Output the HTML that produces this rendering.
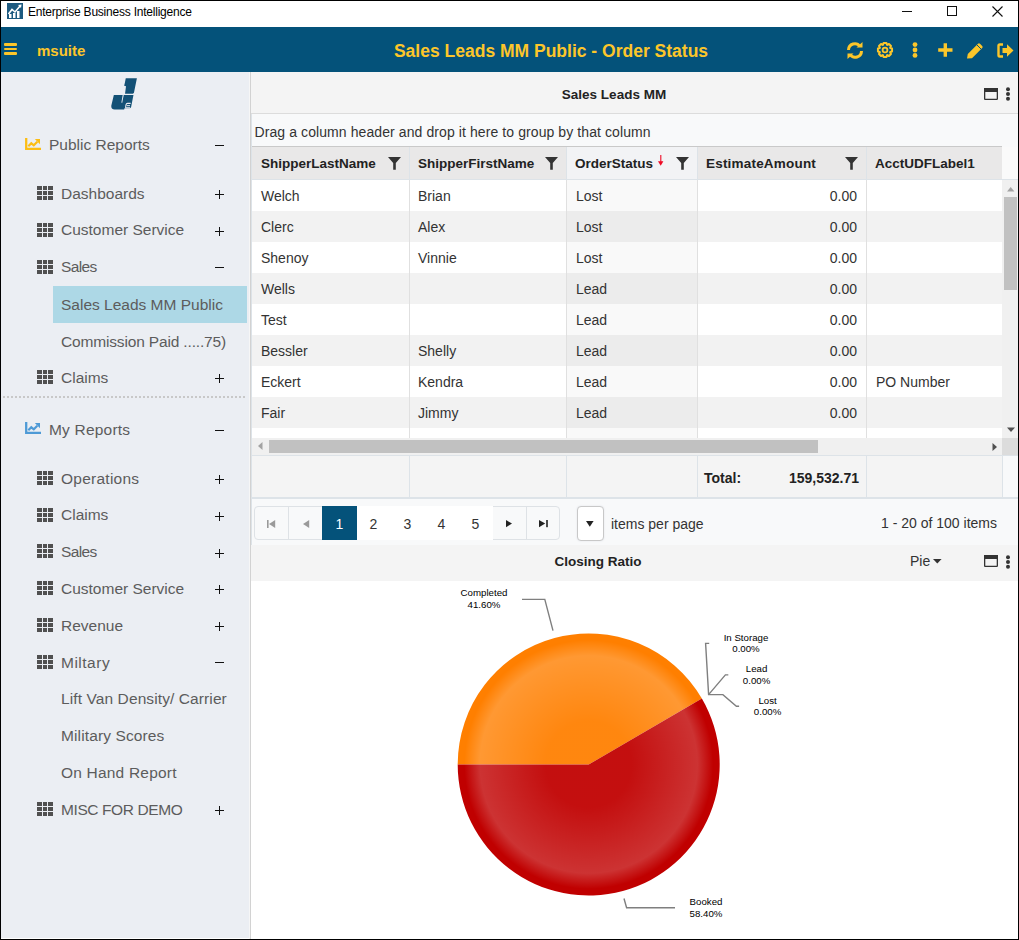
<!DOCTYPE html><html><head><meta charset="utf-8"><style>
*{box-sizing:border-box;margin:0;padding:0}
html,body{width:1019px;height:940px;overflow:hidden;background:#fff}
body{position:relative;font-family:"Liberation Sans",sans-serif;color:#333}
.a{position:absolute}
.t{position:absolute;white-space:nowrap;line-height:1}
svg{position:absolute;overflow:visible}
</style></head><body>
<div class="a" style="left:0px;top:0px;width:1019px;height:27px;background:#fff"></div>
<svg style="left:7px;top:3px" width="16" height="16" viewBox="0 0 16 16"><rect x="0" y="0" width="16" height="16" fill="#1d5a80"/><path d="M1.5 11 L5 6.5 L8 9 L13.5 2.5" stroke="#fff" stroke-width="1.6" fill="none"/><path d="M11 2 L14.5 1.5 L14 5 Z" fill="#fff"/><rect x="2" y="11" width="2.5" height="4" fill="#fff"/><rect x="6" y="10" width="2.5" height="5" fill="#fff"/><rect x="10" y="8" width="2.5" height="7" fill="#fff"/></svg>
<div class="t" style="left:28px;top:5.54px;font-size:12px;color:#000;font-weight:400;letter-spacing:-0.22px">Enterprise Business Intelligence</div>
<div class="a" style="left:902px;top:11px;width:10px;height:1px;background:#111"></div>
<div class="a" style="left:947px;top:6px;width:10px;height:10px;border:1px solid #111"></div>
<svg style="left:992px;top:6px" width="11" height="11" viewBox="0 0 11 11"><path d="M0.5 0.5 L10.5 10.5 M10.5 0.5 L0.5 10.5" stroke="#111" stroke-width="1.1"/></svg>
<div class="a" style="left:0px;top:27px;width:1019px;height:45px;background:#04527a"></div>
<div class="a" style="left:4px;top:43px;width:13px;height:2.5px;background:#fcc62a;border-radius:1px"></div>
<div class="a" style="left:4px;top:47.5px;width:13px;height:2.5px;background:#fcc62a;border-radius:1px"></div>
<div class="a" style="left:4px;top:52px;width:13px;height:2.5px;background:#fcc62a;border-radius:1px"></div>
<div class="t" style="left:37px;top:43.30px;font-size:15px;color:#fcc62a;font-weight:700;">msuite</div>
<div class="t" style="left:251px;width:600px;text-align:center;top:43.19px;font-size:17.5px;color:#fcc62a;font-weight:700;">Sales Leads MM Public - Order Status</div>
<svg style="left:846px;top:42px" width="18" height="17" viewBox="0 0 18 17"><path d="M2.5 8 A6.3 6.3 0 0 1 14 4.5" stroke="#fcc62a" stroke-width="3" fill="none"/><path d="M10.5 5.5 L16.5 5.5 L16.5 0 Z" fill="#fcc62a"/><path d="M15.5 9 A6.3 6.3 0 0 1 4 12.5" stroke="#fcc62a" stroke-width="3" fill="none"/><path d="M7.5 11.5 L1.5 11.5 L1.5 17 Z" fill="#fcc62a"/></svg><svg style="left:877px;top:42px" width="16" height="16" viewBox="0 0 16 16"><polygon points="15.06,6.57 15.06,9.43 13.24,9.97 13.10,10.31 14.00,11.98 11.98,14.00 10.31,13.10 9.97,13.24 9.43,15.06 6.57,15.06 6.03,13.24 5.69,13.10 4.02,14.00 2.00,11.98 2.90,10.31 2.76,9.97 0.94,9.43 0.94,6.57 2.76,6.03 2.90,5.69 2.00,4.02 4.02,2.00 5.69,2.90 6.03,2.76 6.57,0.94 9.43,0.94 9.97,2.76 10.31,2.90 11.98,2.00 14.00,4.02 13.10,5.69 13.24,6.03" fill="none" stroke="#fcc62a" stroke-width="2" stroke-linejoin="round"/><circle cx="8" cy="8" r="2.4" fill="none" stroke="#fcc62a" stroke-width="1.8"/></svg><svg style="left:912px;top:42px" width="6" height="16" viewBox="0 0 6 16"><circle cx="3" cy="2.6" r="2.4" fill="#fcc62a"/><circle cx="3" cy="8" r="2.4" fill="#fcc62a"/><circle cx="3" cy="13.4" r="2.4" fill="#fcc62a"/></svg><svg style="left:937px;top:42px" width="16" height="16" viewBox="0 0 16 16"><path d="M8.3 1.2 V14.8 M1.2 8 H15.5" stroke="#fcc62a" stroke-width="3.4" stroke-linecap="butt"/></svg><svg style="left:966px;top:42px" width="18" height="17" viewBox="0 0 18 17"><path d="M1 16.5 L1.8 12 L12 1.8 Q13 0.8 14 1.8 L16.2 4 Q17.2 5 16.2 6 L6 16.2 Z" fill="#fcc62a"/><path d="M11 3 L15 7" stroke="#04527a" stroke-width="1"/></svg><svg style="left:997px;top:43px" width="17" height="15" viewBox="0 0 17 15"><path d="M6 1.5 H2.8 Q1.5 1.5 1.5 2.8 V12.2 Q1.5 13.5 2.8 13.5 H6" stroke="#fcc62a" stroke-width="2.4" fill="none"/><path d="M5.5 5 H10 V1.2 L16.5 7.5 L10 13.8 V10 H5.5 Z" fill="#fcc62a"/></svg>
<div class="a" style="left:0px;top:72px;width:249px;height:866px;background:#ebeef3"></div>
<div class="a" style="left:249px;top:72px;width:1px;height:868px;background:#f6f6f6"></div>
<div class="a" style="left:250px;top:72px;width:1px;height:868px;background:#d2d2d2"></div>
<svg style="left:100px;top:72px" width="50" height="45" viewBox="0 0 1019 917"><g fill="#135176"><path d="M525 125 L752 125 L692 425 Q686 442 668 442 L510 442 L530 292 L492 280 L506 222 Z"/><path d="M282 470 L682 470 L634 712 Q626 738 598 738 L500 740 L492 765 L300 765 Q222 762 230 690 Z"/></g><path d="M462 470 L484 470 L452 632 L436 622 Z" fill="#ebeef3"/><path d="M625 640 L560 640 Q535 640 530 670 L522 712 Q518 730 540 730 L612 730" fill="none" stroke="#ebeef3" stroke-width="22"/><path d="M545 686 L612 686" stroke="#ebeef3" stroke-width="20"/></svg>
<svg style="left:25px;top:138px" width="16" height="13" viewBox="0 0 16 13"><path d="M1.2 0 V10.9 H16" stroke="#fcbd14" stroke-width="2.3" fill="none"/><path d="M3.3 8.3 L6.3 5.3 L8.8 7.3 L12.3 3.8" stroke="#fcbd14" stroke-width="2.2" fill="none"/><path d="M9.8 1 L15 1 L15 6.2 Z" fill="#fcbd14"/></svg>
<div class="t" style="left:49px;top:137.48px;font-size:15.5px;color:#5c5c5c;font-weight:400;">Public Reports</div>
<div class="a" style="left:215px;top:145px;width:9px;height:1px;background:#111"></div>
<svg style="left:37px;top:185.80px" width="16" height="14" viewBox="0 0 16 14"><g fill="#505050"><rect x="0" y="0" width="5" height="4"/><rect x="6" y="0" width="4" height="4"/><rect x="11" y="0" width="5" height="4"/><rect x="0" y="5" width="5" height="4"/><rect x="6" y="5" width="4" height="4"/><rect x="11" y="5" width="5" height="4"/><rect x="0" y="10" width="5" height="4"/><rect x="6" y="10" width="4" height="4"/><rect x="11" y="10" width="5" height="4"/></g></svg>
<div class="t" style="left:61px;top:185.68px;font-size:15.5px;color:#5c5c5c;font-weight:400;">Dashboards</div>
<div class="a" style="left:215px;top:194px;width:9px;height:1px;background:#111"></div>
<div class="a" style="left:219px;top:190px;width:1px;height:9px;background:#111"></div>
<svg style="left:37px;top:222.60px" width="16" height="14" viewBox="0 0 16 14"><g fill="#505050"><rect x="0" y="0" width="5" height="4"/><rect x="6" y="0" width="4" height="4"/><rect x="11" y="0" width="5" height="4"/><rect x="0" y="5" width="5" height="4"/><rect x="6" y="5" width="4" height="4"/><rect x="11" y="5" width="5" height="4"/><rect x="0" y="10" width="5" height="4"/><rect x="6" y="10" width="4" height="4"/><rect x="11" y="10" width="5" height="4"/></g></svg>
<div class="t" style="left:61px;top:222.48px;font-size:15.5px;color:#5c5c5c;font-weight:400;">Customer Service</div>
<div class="a" style="left:215px;top:231px;width:9px;height:1px;background:#111"></div>
<div class="a" style="left:219px;top:227px;width:1px;height:9px;background:#111"></div>
<svg style="left:37px;top:259.50px" width="16" height="14" viewBox="0 0 16 14"><g fill="#505050"><rect x="0" y="0" width="5" height="4"/><rect x="6" y="0" width="4" height="4"/><rect x="11" y="0" width="5" height="4"/><rect x="0" y="5" width="5" height="4"/><rect x="6" y="5" width="4" height="4"/><rect x="11" y="5" width="5" height="4"/><rect x="0" y="10" width="5" height="4"/><rect x="6" y="10" width="4" height="4"/><rect x="11" y="10" width="5" height="4"/></g></svg>
<div class="t" style="left:61px;top:259.38px;font-size:15.5px;color:#5c5c5c;font-weight:400;;letter-spacing:-0.6px">Sales</div>
<div class="a" style="left:215px;top:267px;width:9px;height:1px;background:#111"></div>
<div class="a" style="left:53px;top:286px;width:194px;height:37px;background:#add8e6"></div>
<div class="t" style="left:61px;top:296.88px;font-size:15.5px;color:#5c5c5c;font-weight:400;">Sales Leads MM Public</div>
<div class="t" style="left:61px;top:333.88px;font-size:15.5px;color:#5c5c5c;font-weight:400;;letter-spacing:-0.16px">Commission Paid .....75)</div>
<svg style="left:37px;top:370.00px" width="16" height="14" viewBox="0 0 16 14"><g fill="#505050"><rect x="0" y="0" width="5" height="4"/><rect x="6" y="0" width="4" height="4"/><rect x="11" y="0" width="5" height="4"/><rect x="0" y="5" width="5" height="4"/><rect x="6" y="5" width="4" height="4"/><rect x="11" y="5" width="5" height="4"/><rect x="0" y="10" width="5" height="4"/><rect x="6" y="10" width="4" height="4"/><rect x="11" y="10" width="5" height="4"/></g></svg>
<div class="t" style="left:61px;top:369.88px;font-size:15.5px;color:#5c5c5c;font-weight:400;">Claims</div>
<div class="a" style="left:215px;top:378px;width:9px;height:1px;background:#111"></div>
<div class="a" style="left:219px;top:374px;width:1px;height:9px;background:#111"></div>
<div class="a" style="left:3px;top:396px;width:244px;height:2px;background:repeating-linear-gradient(90deg,#c8c8c8 0 2px,transparent 2px 4px)"></div>
<svg style="left:25px;top:422px" width="16" height="13" viewBox="0 0 16 13"><path d="M1.2 0 V10.9 H16" stroke="#4e9ad6" stroke-width="2.3" fill="none"/><path d="M3.3 8.3 L6.3 5.3 L8.8 7.3 L12.3 3.8" stroke="#4e9ad6" stroke-width="2.2" fill="none"/><path d="M9.8 1 L15 1 L15 6.2 Z" fill="#4e9ad6"/></svg>
<div class="t" style="left:49px;top:421.68px;font-size:15.5px;color:#5c5c5c;font-weight:400;;letter-spacing:0.2px">My Reports</div>
<div class="a" style="left:215px;top:430px;width:9px;height:1px;background:#111"></div>
<svg style="left:37px;top:470.80px" width="16" height="14" viewBox="0 0 16 14"><g fill="#505050"><rect x="0" y="0" width="5" height="4"/><rect x="6" y="0" width="4" height="4"/><rect x="11" y="0" width="5" height="4"/><rect x="0" y="5" width="5" height="4"/><rect x="6" y="5" width="4" height="4"/><rect x="11" y="5" width="5" height="4"/><rect x="0" y="10" width="5" height="4"/><rect x="6" y="10" width="4" height="4"/><rect x="11" y="10" width="5" height="4"/></g></svg>
<div class="t" style="left:61px;top:470.68px;font-size:15.5px;color:#5c5c5c;font-weight:400;;letter-spacing:0.25px">Operations</div>
<div class="a" style="left:215px;top:479px;width:9px;height:1px;background:#111"></div>
<div class="a" style="left:219px;top:475px;width:1px;height:9px;background:#111"></div>
<svg style="left:37px;top:507.57px" width="16" height="14" viewBox="0 0 16 14"><g fill="#505050"><rect x="0" y="0" width="5" height="4"/><rect x="6" y="0" width="4" height="4"/><rect x="11" y="0" width="5" height="4"/><rect x="0" y="5" width="5" height="4"/><rect x="6" y="5" width="4" height="4"/><rect x="11" y="5" width="5" height="4"/><rect x="0" y="10" width="5" height="4"/><rect x="6" y="10" width="4" height="4"/><rect x="11" y="10" width="5" height="4"/></g></svg>
<div class="t" style="left:61px;top:507.45px;font-size:15.5px;color:#5c5c5c;font-weight:400;">Claims</div>
<div class="a" style="left:215px;top:516px;width:9px;height:1px;background:#111"></div>
<div class="a" style="left:219px;top:512px;width:1px;height:9px;background:#111"></div>
<svg style="left:37px;top:544.34px" width="16" height="14" viewBox="0 0 16 14"><g fill="#505050"><rect x="0" y="0" width="5" height="4"/><rect x="6" y="0" width="4" height="4"/><rect x="11" y="0" width="5" height="4"/><rect x="0" y="5" width="5" height="4"/><rect x="6" y="5" width="4" height="4"/><rect x="11" y="5" width="5" height="4"/><rect x="0" y="10" width="5" height="4"/><rect x="6" y="10" width="4" height="4"/><rect x="11" y="10" width="5" height="4"/></g></svg>
<div class="t" style="left:61px;top:544.22px;font-size:15.5px;color:#5c5c5c;font-weight:400;;letter-spacing:-0.6px">Sales</div>
<div class="a" style="left:215px;top:553px;width:9px;height:1px;background:#111"></div>
<div class="a" style="left:219px;top:549px;width:1px;height:9px;background:#111"></div>
<svg style="left:37px;top:581.11px" width="16" height="14" viewBox="0 0 16 14"><g fill="#505050"><rect x="0" y="0" width="5" height="4"/><rect x="6" y="0" width="4" height="4"/><rect x="11" y="0" width="5" height="4"/><rect x="0" y="5" width="5" height="4"/><rect x="6" y="5" width="4" height="4"/><rect x="11" y="5" width="5" height="4"/><rect x="0" y="10" width="5" height="4"/><rect x="6" y="10" width="4" height="4"/><rect x="11" y="10" width="5" height="4"/></g></svg>
<div class="t" style="left:61px;top:580.99px;font-size:15.5px;color:#5c5c5c;font-weight:400;">Customer Service</div>
<div class="a" style="left:215px;top:589px;width:9px;height:1px;background:#111"></div>
<div class="a" style="left:219px;top:585px;width:1px;height:9px;background:#111"></div>
<svg style="left:37px;top:617.88px" width="16" height="14" viewBox="0 0 16 14"><g fill="#505050"><rect x="0" y="0" width="5" height="4"/><rect x="6" y="0" width="4" height="4"/><rect x="11" y="0" width="5" height="4"/><rect x="0" y="5" width="5" height="4"/><rect x="6" y="5" width="4" height="4"/><rect x="11" y="5" width="5" height="4"/><rect x="0" y="10" width="5" height="4"/><rect x="6" y="10" width="4" height="4"/><rect x="11" y="10" width="5" height="4"/></g></svg>
<div class="t" style="left:61px;top:617.76px;font-size:15.5px;color:#5c5c5c;font-weight:400;">Revenue</div>
<div class="a" style="left:215px;top:626px;width:9px;height:1px;background:#111"></div>
<div class="a" style="left:219px;top:622px;width:1px;height:9px;background:#111"></div>
<svg style="left:37px;top:654.65px" width="16" height="14" viewBox="0 0 16 14"><g fill="#505050"><rect x="0" y="0" width="5" height="4"/><rect x="6" y="0" width="4" height="4"/><rect x="11" y="0" width="5" height="4"/><rect x="0" y="5" width="5" height="4"/><rect x="6" y="5" width="4" height="4"/><rect x="11" y="5" width="5" height="4"/><rect x="0" y="10" width="5" height="4"/><rect x="6" y="10" width="4" height="4"/><rect x="11" y="10" width="5" height="4"/></g></svg>
<div class="t" style="left:61px;top:654.53px;font-size:15.5px;color:#5c5c5c;font-weight:400;;letter-spacing:0.5px">Miltary</div>
<div class="a" style="left:215px;top:662px;width:9px;height:1px;background:#111"></div>
<div class="t" style="left:61px;top:691.30px;font-size:15.5px;color:#5c5c5c;font-weight:400;;letter-spacing:0.1px">Lift Van Density/ Carrier</div>
<div class="t" style="left:61px;top:728.07px;font-size:15.5px;color:#5c5c5c;font-weight:400;;letter-spacing:0.12px">Military Scores</div>
<div class="t" style="left:61px;top:764.84px;font-size:15.5px;color:#5c5c5c;font-weight:400;;letter-spacing:0.2px">On Hand Report</div>
<svg style="left:37px;top:801.70px" width="16" height="14" viewBox="0 0 16 14"><g fill="#505050"><rect x="0" y="0" width="5" height="4"/><rect x="6" y="0" width="4" height="4"/><rect x="11" y="0" width="5" height="4"/><rect x="0" y="5" width="5" height="4"/><rect x="6" y="5" width="4" height="4"/><rect x="11" y="5" width="5" height="4"/><rect x="0" y="10" width="5" height="4"/><rect x="6" y="10" width="4" height="4"/><rect x="11" y="10" width="5" height="4"/></g></svg>
<div class="t" style="left:61px;top:801.58px;font-size:15.5px;color:#5c5c5c;font-weight:400;;letter-spacing:-0.4px">MISC FOR DEMO</div>
<div class="a" style="left:215px;top:810px;width:9px;height:1px;background:#111"></div>
<div class="a" style="left:219px;top:806px;width:1px;height:9px;background:#111"></div>
<div class="a" style="left:251px;top:72px;width:767px;height:41px;background:#f4f4f4"></div>
<div class="a" style="left:251px;top:113px;width:767px;height:1px;background:#dcdcdc"></div>
<div class="t" style="left:314px;width:600px;text-align:center;top:88.07px;font-size:13.5px;color:#222;font-weight:700;">Sales Leads MM</div>
<svg style="left:984px;top:87.5px" width="14" height="12" viewBox="0 0 14 12"><rect x="0.65" y="0.65" width="12.7" height="10.7" rx="0.6" fill="none" stroke="#333" stroke-width="1.3"/><rect x="0" y="0" width="14" height="4" fill="#333"/></svg>
<svg style="left:1004.5px;top:87px" width="6" height="14" viewBox="0 0 6 14"><circle cx="3" cy="2.2" r="2" fill="#333"/><circle cx="3" cy="7" r="2" fill="#333"/><circle cx="3" cy="11.8" r="2" fill="#333"/></svg>
<div class="a" style="left:251px;top:114px;width:767px;height:33px;background:#f8f9fa"></div>
<div class="a" style="left:251px;top:146px;width:751px;height:1px;background:#c9c9c9"></div>
<div class="t" style="left:254.5px;top:125.15px;font-size:14px;color:#333;font-weight:400;letter-spacing:0.09px">Drag a column header and drop it here to group by that column</div>
<div class="a" style="left:252px;top:147px;width:157px;height:32px;background:#e9e8e8"></div>
<div class="t" style="left:261px;top:157.07px;font-size:13.5px;color:#222;font-weight:700;">ShipperLastName</div>
<div class="a" style="left:409px;top:147px;width:157px;height:32px;background:#e9e8e8"></div>
<div class="a" style="left:409px;top:147px;width:1px;height:32px;background:#dde3e8"></div>
<div class="t" style="left:418px;top:157.07px;font-size:13.5px;color:#222;font-weight:700;">ShipperFirstName</div>
<div class="a" style="left:566px;top:147px;width:131px;height:32px;background:#f2f3f5"></div>
<div class="a" style="left:566px;top:147px;width:1px;height:32px;background:#dde3e8"></div>
<div class="t" style="left:575px;top:157.07px;font-size:13.5px;color:#222;font-weight:700;">OrderStatus</div>
<div class="a" style="left:697px;top:147px;width:169px;height:32px;background:#e9e8e8"></div>
<div class="a" style="left:697px;top:147px;width:1px;height:32px;background:#dde3e8"></div>
<div class="t" style="left:706px;top:157.07px;font-size:13.5px;color:#222;font-weight:700;letter-spacing:0.2px">EstimateAmount</div>
<div class="a" style="left:866px;top:147px;width:136px;height:32px;background:#e9e8e8"></div>
<div class="a" style="left:866px;top:147px;width:1px;height:32px;background:#dde3e8"></div>
<div class="t" style="left:875px;top:157.07px;font-size:13.5px;color:#222;font-weight:700;">AcctUDFLabel1</div>
<div class="a" style="left:1002px;top:147px;width:16px;height:32px;background:#fafafa"></div>
<div class="a" style="left:252px;top:179px;width:766px;height:1px;background:#dde3e8"></div>
<svg style="left:388px;top:157px" width="13" height="13" viewBox="0 0 13 13"><path d="M0 0 H13 L7.8 6 V12.8 L5.2 12.8 V6 Z" fill="#333"/></svg>
<svg style="left:545px;top:157px" width="13" height="13" viewBox="0 0 13 13"><path d="M0 0 H13 L7.8 6 V12.8 L5.2 12.8 V6 Z" fill="#333"/></svg>
<svg style="left:676px;top:157px" width="13" height="13" viewBox="0 0 13 13"><path d="M0 0 H13 L7.8 6 V12.8 L5.2 12.8 V6 Z" fill="#333"/></svg>
<svg style="left:845px;top:157px" width="13" height="13" viewBox="0 0 13 13"><path d="M0 0 H13 L7.8 6 V12.8 L5.2 12.8 V6 Z" fill="#333"/></svg>
<svg style="left:657px;top:155px" width="7" height="11" viewBox="0 0 7 11"><path d="M3.8 0 V7" stroke="#ee0a24" stroke-width="1.1"/><path d="M1 6.2 H6.4 L3.7 10.8 Z" fill="#ee0a24"/></svg>
<div class="a" style="left:252px;top:180px;width:750px;height:31px;background:#ffffff"></div>
<div class="a" style="left:566px;top:180px;width:131px;height:31px;background:#f9f9f9"></div>
<div class="t" style="left:261px;top:188.65px;font-size:14px;color:#333;font-weight:400;">Welch</div>
<div class="t" style="left:418px;top:188.65px;font-size:14px;color:#333;font-weight:400;">Brian</div>
<div class="t" style="left:576px;top:188.65px;font-size:14px;color:#333;font-weight:400;">Lost</div>
<div class="t" style="right:162px;top:188.65px;font-size:14px;color:#333;font-weight:400;">0.00</div>
<div class="t" style="left:876px;top:188.65px;font-size:14px;color:#333;font-weight:400;"></div>
<div class="a" style="left:252px;top:211px;width:750px;height:31px;background:#f2f2f2"></div>
<div class="a" style="left:566px;top:211px;width:131px;height:31px;background:#ececec"></div>
<div class="t" style="left:261px;top:219.65px;font-size:14px;color:#333;font-weight:400;">Clerc</div>
<div class="t" style="left:418px;top:219.65px;font-size:14px;color:#333;font-weight:400;">Alex</div>
<div class="t" style="left:576px;top:219.65px;font-size:14px;color:#333;font-weight:400;">Lost</div>
<div class="t" style="right:162px;top:219.65px;font-size:14px;color:#333;font-weight:400;">0.00</div>
<div class="t" style="left:876px;top:219.65px;font-size:14px;color:#333;font-weight:400;"></div>
<div class="a" style="left:252px;top:242px;width:750px;height:31px;background:#ffffff"></div>
<div class="a" style="left:566px;top:242px;width:131px;height:31px;background:#f9f9f9"></div>
<div class="t" style="left:261px;top:250.65px;font-size:14px;color:#333;font-weight:400;">Shenoy</div>
<div class="t" style="left:418px;top:250.65px;font-size:14px;color:#333;font-weight:400;">Vinnie</div>
<div class="t" style="left:576px;top:250.65px;font-size:14px;color:#333;font-weight:400;">Lost</div>
<div class="t" style="right:162px;top:250.65px;font-size:14px;color:#333;font-weight:400;">0.00</div>
<div class="t" style="left:876px;top:250.65px;font-size:14px;color:#333;font-weight:400;"></div>
<div class="a" style="left:252px;top:273px;width:750px;height:31px;background:#f2f2f2"></div>
<div class="a" style="left:566px;top:273px;width:131px;height:31px;background:#ececec"></div>
<div class="t" style="left:261px;top:281.65px;font-size:14px;color:#333;font-weight:400;">Wells</div>
<div class="t" style="left:418px;top:281.65px;font-size:14px;color:#333;font-weight:400;"></div>
<div class="t" style="left:576px;top:281.65px;font-size:14px;color:#333;font-weight:400;">Lead</div>
<div class="t" style="right:162px;top:281.65px;font-size:14px;color:#333;font-weight:400;">0.00</div>
<div class="t" style="left:876px;top:281.65px;font-size:14px;color:#333;font-weight:400;"></div>
<div class="a" style="left:252px;top:304px;width:750px;height:31px;background:#ffffff"></div>
<div class="a" style="left:566px;top:304px;width:131px;height:31px;background:#f9f9f9"></div>
<div class="t" style="left:261px;top:312.65px;font-size:14px;color:#333;font-weight:400;">Test</div>
<div class="t" style="left:418px;top:312.65px;font-size:14px;color:#333;font-weight:400;"></div>
<div class="t" style="left:576px;top:312.65px;font-size:14px;color:#333;font-weight:400;">Lead</div>
<div class="t" style="right:162px;top:312.65px;font-size:14px;color:#333;font-weight:400;">0.00</div>
<div class="t" style="left:876px;top:312.65px;font-size:14px;color:#333;font-weight:400;"></div>
<div class="a" style="left:252px;top:335px;width:750px;height:31px;background:#f2f2f2"></div>
<div class="a" style="left:566px;top:335px;width:131px;height:31px;background:#ececec"></div>
<div class="t" style="left:261px;top:343.65px;font-size:14px;color:#333;font-weight:400;">Bessler</div>
<div class="t" style="left:418px;top:343.65px;font-size:14px;color:#333;font-weight:400;">Shelly</div>
<div class="t" style="left:576px;top:343.65px;font-size:14px;color:#333;font-weight:400;">Lead</div>
<div class="t" style="right:162px;top:343.65px;font-size:14px;color:#333;font-weight:400;">0.00</div>
<div class="t" style="left:876px;top:343.65px;font-size:14px;color:#333;font-weight:400;"></div>
<div class="a" style="left:252px;top:366px;width:750px;height:31px;background:#ffffff"></div>
<div class="a" style="left:566px;top:366px;width:131px;height:31px;background:#f9f9f9"></div>
<div class="t" style="left:261px;top:374.65px;font-size:14px;color:#333;font-weight:400;">Eckert</div>
<div class="t" style="left:418px;top:374.65px;font-size:14px;color:#333;font-weight:400;">Kendra</div>
<div class="t" style="left:576px;top:374.65px;font-size:14px;color:#333;font-weight:400;">Lead</div>
<div class="t" style="right:162px;top:374.65px;font-size:14px;color:#333;font-weight:400;">0.00</div>
<div class="t" style="left:876px;top:374.65px;font-size:14px;color:#333;font-weight:400;">PO Number</div>
<div class="a" style="left:252px;top:397px;width:750px;height:31px;background:#f2f2f2"></div>
<div class="a" style="left:566px;top:397px;width:131px;height:31px;background:#ececec"></div>
<div class="t" style="left:261px;top:405.65px;font-size:14px;color:#333;font-weight:400;">Fair</div>
<div class="t" style="left:418px;top:405.65px;font-size:14px;color:#333;font-weight:400;">Jimmy</div>
<div class="t" style="left:576px;top:405.65px;font-size:14px;color:#333;font-weight:400;">Lead</div>
<div class="t" style="right:162px;top:405.65px;font-size:14px;color:#333;font-weight:400;">0.00</div>
<div class="t" style="left:876px;top:405.65px;font-size:14px;color:#333;font-weight:400;"></div>
<div class="a" style="left:252px;top:428px;width:750px;height:10px;background:#ffffff"></div>
<div class="a" style="left:566px;top:428px;width:131px;height:10px;background:#f9f9f9"></div>
<div class="a" style="left:409px;top:180px;width:1px;height:258px;background:#e0e0e0"></div>
<div class="a" style="left:566px;top:180px;width:1px;height:258px;background:#e0e0e0"></div>
<div class="a" style="left:697px;top:180px;width:1px;height:258px;background:#e0e0e0"></div>
<div class="a" style="left:866px;top:180px;width:1px;height:258px;background:#e0e0e0"></div>
<div class="a" style="left:1002px;top:180px;width:16px;height:258px;background:#f0f0f0"></div>
<div class="a" style="left:1004px;top:197px;width:13px;height:93px;background:#c1c1c1"></div>
<svg style="left:1006.8px;top:186.5px" width="8" height="5" viewBox="0 0 8 5"><path d="M0 4.6 L3.7 0 L7.4 4.6 Z" fill="#a3a3a3"/></svg>
<svg style="left:1005.5px;top:427px" width="10" height="6" viewBox="0 0 10 6"><path d="M1 0.5 L9 0.5 L5 5 Z" fill="#505050"/></svg>
<div class="a" style="left:252px;top:438px;width:750px;height:17px;background:#f0f0f0"></div>
<div class="a" style="left:269px;top:440px;width:549px;height:13px;background:#c1c1c1"></div>
<svg style="left:257px;top:441px" width="6" height="10" viewBox="0 0 6 10"><path d="M5.5 1 L1 5 L5.5 9 Z" fill="#a3a3a3"/></svg>
<svg style="left:991.8px;top:441.6px" width="6" height="10" viewBox="0 0 6 10"><path d="M0.5 1 L5 5 L0.5 9 Z" fill="#505050"/></svg>
<div class="a" style="left:1002px;top:438px;width:16px;height:17px;background:#dcdcdc"></div>
<div class="a" style="left:252px;top:455px;width:766px;height:1px;background:#dde3e8"></div>
<div class="a" style="left:252px;top:456px;width:750px;height:42px;background:#f4f4f4"></div>
<div class="a" style="left:1002px;top:456px;width:16px;height:42px;background:#f8f9fa"></div>
<div class="a" style="left:409px;top:456px;width:1px;height:42px;background:#dde3e8"></div>
<div class="a" style="left:566px;top:456px;width:1px;height:42px;background:#dde3e8"></div>
<div class="a" style="left:697px;top:456px;width:1px;height:42px;background:#dde3e8"></div>
<div class="a" style="left:866px;top:456px;width:1px;height:42px;background:#dde3e8"></div>
<div class="a" style="left:1002px;top:456px;width:1px;height:42px;background:#dde3e8"></div>
<div class="t" style="left:704px;top:470.85px;font-size:14px;color:#222;font-weight:700;">Total:</div>
<div class="t" style="right:160px;top:470.85px;font-size:14px;color:#222;font-weight:700;">159,532.71</div>
<div class="a" style="left:252px;top:497px;width:766px;height:2px;background:#dde3e8"></div>
<div class="a" style="left:252px;top:499px;width:766px;height:46px;background:#f8f9fa"></div>
<div class="a" style="left:254px;top:506px;width:306px;height:34px;background:#f8f9fa;border:1px solid #dee2e6;border-radius:4px"></div>
<div class="a" style="left:288px;top:506px;width:1px;height:34px;background:#dee2e6"></div>
<div class="a" style="left:526px;top:506px;width:1px;height:34px;background:#dee2e6"></div>
<div class="a" style="left:322px;top:506px;width:35px;height:34px;background:#04527a"></div>
<div class="a" style="left:357px;top:506px;width:136px;height:34px;background:#fff"></div>
<div class="t" style="left:39.5px;width:600px;text-align:center;top:517.15px;font-size:14px;color:#fff;font-weight:400;">1</div>
<div class="t" style="left:73.5px;width:600px;text-align:center;top:517.15px;font-size:14px;color:#333;font-weight:400;">2</div>
<div class="t" style="left:107.5px;width:600px;text-align:center;top:517.15px;font-size:14px;color:#333;font-weight:400;">3</div>
<div class="t" style="left:141.5px;width:600px;text-align:center;top:517.15px;font-size:14px;color:#333;font-weight:400;">4</div>
<div class="t" style="left:175.5px;width:600px;text-align:center;top:517.15px;font-size:14px;color:#333;font-weight:400;">5</div>
<svg style="left:267px;top:520px" width="9" height="8" viewBox="0 0 9 8"><rect x="0" y="0" width="1.6" height="8" fill="#9a9a9a"/><path d="M8.2 0 L2 4 L8.2 8 Z" fill="#9a9a9a"/></svg>
<svg style="left:302.5px;top:520px" width="7" height="8" viewBox="0 0 7 8"><path d="M6.2 0 L0 4 L6.2 8 Z" fill="#9a9a9a"/></svg>
<svg style="left:506.3px;top:520.3px" width="7" height="8" viewBox="0 0 7 8"><path d="M0 0 L6 3.6 L0 7.2 Z" fill="#222"/></svg>
<svg style="left:538.7px;top:520.3px" width="9" height="8" viewBox="0 0 9 8"><path d="M0 0 L6.2 3.6 L0 7.2 Z" fill="#222"/><rect x="7.2" y="0" width="1.6" height="7.2" fill="#222"/></svg>
<div class="a" style="left:577px;top:506px;width:27px;height:35px;background:#fff;border:1px solid #c8c8c8;border-radius:4px;box-shadow:0 0 2px #dfe3e8"></div>
<svg style="left:585.5px;top:521px" width="8" height="6" viewBox="0 0 8 6"><path d="M0 0 H7.6 L3.8 5.8 Z" fill="#222"/></svg>
<div class="t" style="left:611px;top:517.15px;font-size:14px;color:#333;font-weight:400;">items per page</div>
<div class="t" style="right:22px;top:516.15px;font-size:14px;color:#333;font-weight:400;">1 - 20 of 100 items</div>
<div class="a" style="left:251px;top:114px;width:1px;height:431px;background:#dde3e8"></div>
<div class="a" style="left:251px;top:545px;width:767px;height:36px;background:#f4f4f4"></div>
<div class="t" style="left:298px;width:600px;text-align:center;top:554.57px;font-size:13.5px;color:#222;font-weight:700;">Closing Ratio</div>
<div class="t" style="left:910px;top:554.15px;font-size:14px;color:#333;font-weight:400;">Pie</div>
<svg style="left:932.5px;top:558.7px" width="9" height="5" viewBox="0 0 9 5"><path d="M0 0 H8.6 L4.3 4.4 Z" fill="#333"/></svg>
<svg style="left:984px;top:555px" width="14" height="12" viewBox="0 0 14 12"><rect x="0.65" y="0.65" width="12.7" height="10.7" rx="0.6" fill="none" stroke="#333" stroke-width="1.3"/><rect x="0" y="0" width="14" height="4" fill="#333"/></svg>
<svg style="left:1004.5px;top:555px" width="6" height="14" viewBox="0 0 6 14"><circle cx="3" cy="2.2" r="2" fill="#333"/><circle cx="3" cy="7" r="2" fill="#333"/><circle cx="3" cy="11.8" r="2" fill="#333"/></svg>
<div class="a" style="left:251px;top:581px;width:767px;height:358px;background:#fff"></div>
<svg style="left:0;top:0" width="1019" height="940" viewBox="0 0 1019 940"><defs><radialGradient id="bev" gradientUnits="userSpaceOnUse" cx="588.7" cy="764.5" r="131"><stop offset="0.33" stop-color="#fff" stop-opacity="0.06"/><stop offset="0.83" stop-color="#fff" stop-opacity="0.2"/><stop offset="0.95" stop-color="#fff" stop-opacity="0"/></radialGradient><filter id="shd" x="-20%" y="-20%" width="140%" height="140%"><feGaussianBlur stdDeviation="6"/></filter></defs><path d="M588.7 764.5 L457.70000000000005 764.5 A131 131 0 0 1 701.87 698.53 Z" fill="#ff7f00"/><path d="M588.7 764.5 L701.87 698.53 A131 131 0 1 1 457.70000000000005 764.5 Z" fill="#c00000"/><circle cx="588.7" cy="764.5" r="131" fill="url(#bev)"/><path d="M522 599.4 L544.8 599.4 L553 630.6" stroke="#7f7f7f" stroke-width="1.4" fill="none"/><path d="M709.2 643.4 L705.6 643.4 L708.6 694.6 L722.9 694.6 L736.4 706.2 L739.1 706.2 M728.3 674.9 L725.4 674.9 L708.6 694.6" stroke="#7f7f7f" stroke-width="1.4" fill="none"/><path d="M624 898.5 L626.6 907.8 L675 907.8" stroke="#7f7f7f" stroke-width="1.4" fill="none"/></svg>
<div class="t" style="left:184px;width:600px;text-align:center;top:588.29px;font-size:9.7px;color:#000;font-weight:400;">Completed</div>
<div class="t" style="left:184px;width:600px;text-align:center;top:599.99px;font-size:9.7px;color:#000;font-weight:400;">41.60%</div>
<div class="t" style="left:446px;width:600px;text-align:center;top:632.99px;font-size:9.7px;color:#000;font-weight:400;">In Storage</div>
<div class="t" style="left:446px;width:600px;text-align:center;top:643.69px;font-size:9.7px;color:#000;font-weight:400;">0.00%</div>
<div class="t" style="left:456.6px;width:600px;text-align:center;top:664.29px;font-size:9.7px;color:#000;font-weight:400;">Lead</div>
<div class="t" style="left:456.6px;width:600px;text-align:center;top:675.59px;font-size:9.7px;color:#000;font-weight:400;">0.00%</div>
<div class="t" style="left:467.6px;width:600px;text-align:center;top:695.59px;font-size:9.7px;color:#000;font-weight:400;">Lost</div>
<div class="t" style="left:467.6px;width:600px;text-align:center;top:706.89px;font-size:9.7px;color:#000;font-weight:400;">0.00%</div>
<div class="t" style="left:406px;width:600px;text-align:center;top:897.29px;font-size:9.7px;color:#000;font-weight:400;">Booked</div>
<div class="t" style="left:406px;width:600px;text-align:center;top:908.99px;font-size:9.7px;color:#000;font-weight:400;">58.40%</div>
<div class="a" style="left:0px;top:0px;width:1019px;height:1px;background:#000"></div>
<div class="a" style="left:0px;top:939px;width:1019px;height:1px;background:#000"></div>
<div class="a" style="left:0px;top:0px;width:1px;height:940px;background:#000"></div>
<div class="a" style="left:1018px;top:0px;width:1px;height:940px;background:#000"></div>
</body></html>
